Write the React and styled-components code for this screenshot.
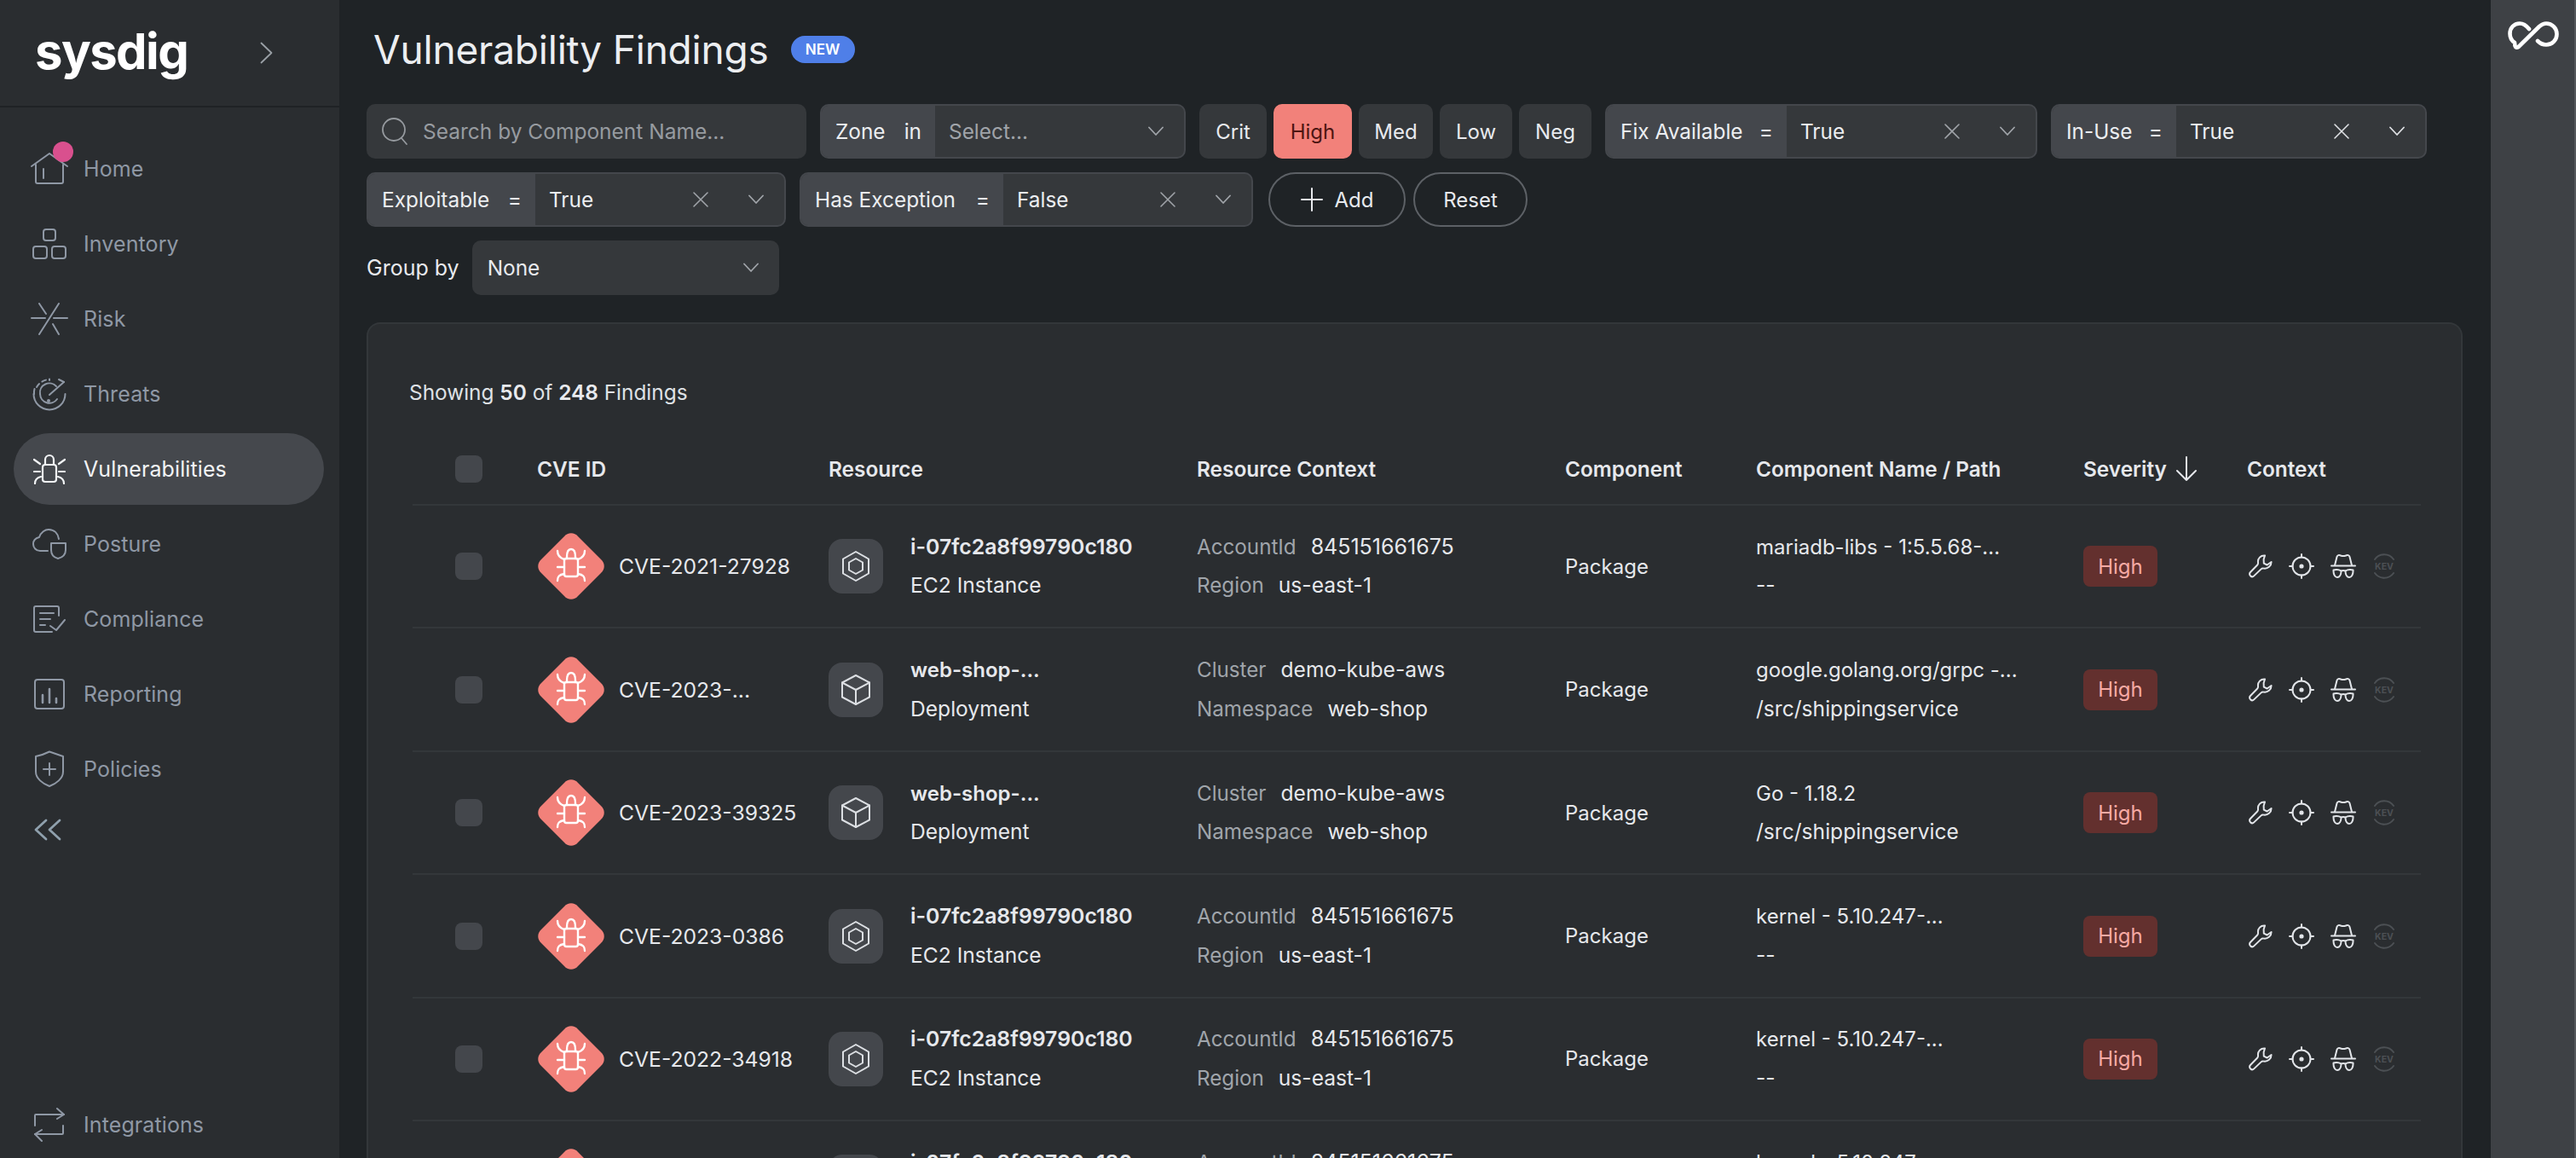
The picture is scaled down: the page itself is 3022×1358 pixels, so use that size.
import React from "react";
import styled, { createGlobalStyle } from "styled-components";

const Global = createGlobalStyle`
  html, body { margin: 0; padding: 0; height: 100%; overflow: hidden; background: #1f2326; }
  body { font-family: Inter, "Noto Sans", sans-serif; }
  #root { height: 100vh; }
  * { box-sizing: border-box; }
`;

const Page = styled.div`
  display: flex;
  width: 100%;
  height: 100vh;
  overflow: hidden;
  background: #1f2326;
`;

const Sidebar = styled.aside`
  flex: 0 0 398px;
  display: flex;
  flex-direction: column;
  background: #2a2d30;
`;
const Brand = styled.div`
  height: 126px;
  flex: none;
  display: flex;
  align-items: center;
  border-bottom: 2px solid #1f2225;
  padding-left: 41px;
`;
const Logo = styled.div`
  width: 264px;
  font-size: 58px;
  font-weight: 700;
  letter-spacing: -1.6px;
  color: #fff;
  line-height: 1;
  margin-top: -4px;
`;
const Nav = styled.nav`
  display: flex;
  flex-direction: column;
  padding: 28px 16px 0;
  flex: 1;
`;
const NavItem = styled.div`
  display: flex;
  align-items: center;
  position: relative;
  padding-left: 20px;
  gap: 18px;
  font-size: 25px;
  font-weight: 400;
  color: ${(p) => (p.$active ? "#f2f4f6" : "#8f98a5")};
  background: ${(p) => (p.$active ? "#45484d" : "transparent")};
  border-radius: 42px;
  margin: 2px 2px 2px 0;
  height: 84px;
  letter-spacing: 0.1px;
`;
const NavIconSlot = styled.span`
  display: flex;
  align-items: center;
  justify-content: center;
  width: 44px;
  height: 44px;
`;
const Dot = styled.span`
  position: absolute;
  left: 46px;
  top: 10px;
  width: 24px;
  height: 24px;
  border-radius: 50%;
  background: #d9508e;
`;
const Collapse = styled.div`
  padding: 0 0 0 24px;
  height: 30px;
  margin-top: 12px;
  color: #8fa0ad;
  display: flex;
  align-items: center;
`;
const NavBottom = styled.div`
  margin-top: auto;
  margin-bottom: -5px;
`;

const Main = styled.main`
  flex: 1;
  min-width: 0;
  padding: 0 33px 0 32px;
  overflow: hidden;
`;
const TitleRow = styled.div`
  height: 116px;
  margin-bottom: 6px;
  display: flex;
  align-items: center;
  padding-left: 8px;
  gap: 26px;
`;
const Title = styled.h1`
  margin: 0;
  font-size: 46px;
  font-weight: 400;
  color: #eceef1;
  letter-spacing: -0.2px;
`;
const NewBadge = styled.span`
  width: 75px;
  height: 32px;
  border-radius: 16px;
  background: #4f7fe8;
  color: #fff;
  font-size: 17px;
  font-weight: 600;
  display: flex;
  align-items: center;
  justify-content: center;
`;
const Filters = styled.div`
  display: flex;
  flex-wrap: wrap;
  gap: 16px 16px;
  align-content: flex-start;
`;
const Search = styled.div`
  width: 516px;
  height: 64px;
  border-radius: 10px;
  background: #35383b;
  display: flex;
  align-items: center;
  padding-left: 17px;
  gap: 17px;
  color: #979ba0;
  font-size: 24.5px;
`;
const FilterGroup = styled.div`
  width: ${(p) => p.$w}px;
  height: 64px;
  display: flex;
  border-radius: 10px;
  border: 2px solid #44474c;
  background: #35383b;
  overflow: hidden;
  font-size: 24.4px;
  color: #eceef1;
`;
const FilterLabel = styled.div`
  width: ${(p) => p.$w}px;
  flex: none;
  background: #44474c;
  display: flex;
  align-items: center;
  justify-content: space-between;
  padding: 0 16px;
`;
const FilterValue = styled.div`
  flex: 1;
  display: flex;
  align-items: center;
  padding: 0 24px 0 16px;
  color: ${(p) => (p.$muted ? "#a0a4a9" : "#eceef1")};
`;
const ValueText = styled.span`
  flex: 1;
`;
const IconBtn = styled.span`
  display: flex;
  align-items: center;
  margin-left: ${(p) => p.$ml || 0}px;
`;
const SevGroup = styled.div`
  display: flex;
  gap: 8px;
`;
const SevBtn = styled.div`
  width: ${(p) => p.$w}px;
  height: 64px;
  border-radius: 10px;
  display: flex;
  align-items: center;
  justify-content: center;
  font-size: 24px;
  background: ${(p) => (p.$on ? "#f2817a" : "#35383b")};
  color: ${(p) => (p.$on ? "#4c1512" : "#e8eaee")};
`;
const PillBtn = styled.div`
  width: ${(p) => p.$w}px;
  height: 64px;
  border-radius: 32px;
  border: 2px solid #5d6166;
  display: flex;
  align-items: center;
  justify-content: center;
  gap: 14px;
  color: #e8eaee;
  font-size: 24px;
`;
const PillGroup = styled.div`
  display: flex;
  gap: 9px;
  margin-left: 2px;
`;
const GroupByRow = styled.div`
  display: flex;
  align-items: center;
  gap: 15px;
  margin-top: 16px;
  color: #e8eaee;
  font-size: 25px;
`;
const GroupSelect = styled.div`
  width: 360px;
  height: 64px;
  border-radius: 10px;
  background: #35383b;
  display: flex;
  align-items: center;
  justify-content: space-between;
  padding: 0 24px 0 18px;
  font-size: 24.4px;
`;

const Card = styled.section`
  margin-top: 32px;
  background: #2a2d30;
  border: 2px solid #33373a;
  border-bottom: none;
  border-radius: 16px 16px 0 0;
  height: 1000px;
`;
const Summary = styled.div`
  padding: 64px 0 32px 48px;
  line-height: 32px;
  font-size: 24.4px;
  color: #dfe2e6;
  b { font-weight: 600; color: #e8eaee; }
`;
const Table = styled.div`
  margin: 0 47px 0 52px;
`;
const cols = "146px 342px 432px 432px 224px 384px 192px 204px";
const HeadRow = styled.div`
  display: grid;
  grid-template-columns: ${cols};
  height: 85px;
  align-items: center;
  border-bottom: 2px solid #33373a;
  font-size: 24.4px;
  font-weight: 600;
  color: #e6e8ec;
  padding-top: 1px;
`;
const Row = styled.div`
  display: grid;
  grid-template-columns: ${cols};
  height: 144.45px;
  align-items: center;
  border-bottom: 2px solid #33373a;
  font-size: 24.6px;
  color: #e6e8ec;
`;
const Check = styled.span`
  display: block;
  width: 32px;
  height: 32px;
  margin-left: 50px;
  border-radius: 8px;
  background: #44474c;
`;
const HeadSort = styled.span`
  display: flex;
  align-items: center;
  gap: 10px;
`;
const CveCell = styled.div`
  display: flex;
  align-items: center;
  gap: 17px;
  padding-left: 1px;
  font-size: 24.7px;
`;
const ResCell = styled.div`
  display: flex;
  align-items: center;
  gap: 32px;
`;
const Tile = styled.span`
  width: 64px;
  height: 64px;
  flex: none;
  border-radius: 16px;
  background: #44474c;
  display: flex;
  align-items: center;
  justify-content: center;
`;
const Lines = styled.div`
  display: flex;
  flex-direction: column;
  line-height: 45.5px;
`;
const Strong = styled.span`
  font-weight: 600;
  font-size: ${(p) => (p.$id ? 24.8 : 24)}px;
`;
const KV = styled.div`
  display: flex;
  gap: 17px;
`;
const Key = styled.span`
  color: #a0a5ab;
  font-size: 24.2px;
`;
const Plain = styled.span`
  font-size: 24px;
`;
const Num = styled.span`
  font-size: ${(p) => (p.$num ? 25 : 24.6)}px;
`;
const SevPill = styled.span`
  width: 87px;
  height: 48px;
  border-radius: 8px;
  background: #63302e;
  color: #f7aaa4;
  display: flex;
  align-items: center;
  justify-content: center;
  font-size: 24px;
`;
const CtxIcons = styled.div`
  display: flex;
  align-items: center;
  gap: 19px;
  padding-left: 2px;
  color: #e2e5e9;
`;
const Rail = styled.aside`
  flex: 0 0 100px;
  background: #3e4145;
  border-right: 2px solid #54575b;
  padding: 25px 0 0 20px;
`;

const Svg = ({ w, h, vb, sw = 2, children, c = "currentColor" }) => (
  <svg width={w} height={h} viewBox={vb || `0 0 ${w} ${h}`} fill="none" stroke={c} strokeWidth={sw} strokeLinecap="round" strokeLinejoin="round">
    {children}
  </svg>
);

const HomeI = () => (
  <Svg w={44} h={40}>
    <path d="M1 17L22 2L43 17" />
    <path d="M6 15V35a2 2 0 0 0 2 2H36a2 2 0 0 0 2-2V15" />
    <path d="M15 20V31" />
  </Svg>
);
const InventoryI = () => (
  <Svg w={40} h={36}>
    <rect x="13" y="1" width="14" height="13" rx="3" />
    <rect x="1" y="21" width="16" height="14" rx="3" />
    <rect x="23" y="21" width="16" height="14" rx="3" />
  </Svg>
);
const RiskI = () => (
  <Svg w={44} h={38}>
    <path d="M1 18H17M27 18H43" />
    <path d="M33 1L10 37" />
    <path d="M10 1L18 13" />
    <path d="M26 25L33 37" />
  </Svg>
);
const ThreatsI = () => (
  <Svg w={40} h={40}>
    <path d="M5 12A18 18 0 0 1 20 3" strokeDasharray="5 4" />
    <path d="M20 2.5V4" />
    <path d="M1.5 20A18.5 18.5 0 0 0 38.5 20" />
    <path d="M2.5 14A18 18 0 0 0 2 20" />
    <path d="M28 11A11 11 0 0 0 9 20A11 11 0 0 0 29 26" />
    <path d="M20 21L37 6" />
    <path d="M31 3L37 6" />
    <circle cx="19" cy="28" r="1" />
  </Svg>
);
const VulnI = () => (
  <Svg w={38} h={36} sw={2.2}>
    <rect x="11" y="13" width="16" height="20" rx="3" />
    <path d="M14 13V7a5 5 0 0 1 10 0V13" />
    <path d="M1 7L8 12M37 7L30 12M1 21H8M37 21H30M2 35C2 30 5 28 9 27M36 35C36 30 33 28 29 27" />
  </Svg>
);
const PostureI = () => (
  <Svg w={40} h={36}>
    <path d="M18 26H9C4 26 1 22 1 18C1 14 4 11 8 10C10 4 15 1 19 1C26 1 30 6 31 12" />
    <path d="M22 17H39V25C39 31 34 34 30 35C26 34 22 31 22 25Z" />
  </Svg>
);
const ComplianceI = () => (
  <Svg w={38} h={34}>
    <path d="M30 13V4a2 2 0 0 0-2-2H3a2 2 0 0 0-2 2V30a2 2 0 0 0 2 2H22" />
    <path d="M8 10H24M8 17H20M8 24H14" />
    <path d="M20 25L27 30L37 18" />
  </Svg>
);
const ReportingI = () => (
  <Svg w={36} h={36}>
    <rect x="1" y="1" width="34" height="34" rx="3" />
    <path d="M10 28V19M18 28V12M26 28V23" strokeWidth="2.6" />
  </Svg>
);
const PoliciesI = () => (
  <Svg w={34} h={44}>
    <path d="M17 1.5L33 7V25C33 33 25 39 17 42C9 39 1 33 1 25V7C6 6 12 4 17 1.5Z" />
    <path d="M17 15V29M10 22H24" />
  </Svg>
);
const IntegrationsI = () => (
  <Svg w={36} h={42}>
    <path d="M1 22V10a1 1 0 0 1 1-1H35" />
    <path d="M27 2L35 9L27 14" />
    <path d="M34 22V31a1 1 0 0 1-1 1H1" />
    <path d="M9 27L1 32L9 40" />
  </Svg>
);
const Chevron = ({ c = "#a0a4a9" }) => (
  <Svg w={18} h={12} sw={1.8} c={c}>
    <path d="M1 1.5L9 10L17 1.5" />
  </Svg>
);
const Cross = ({ c = "#a0a4a9" }) => (
  <Svg w={20} h={20} sw={1.6} c={c}>
    <path d="M2 2L18 18M18 2L2 18" />
  </Svg>
);
const SearchI = () => (
  <Svg w={32} h={34} sw={1.8} c="#969a9f">
    <circle cx="15" cy="15" r="13" />
    <path d="M24 25L30 32" />
  </Svg>
);
const Plus = () => (
  <Svg w={26} h={28} sw={2} c="#e8eaee">
    <path d="M13 1V27M1 14H25" />
  </Svg>
);
const ArrowDown = () => (
  <Svg w={26} h={30} sw={2} c="#e6e8ec">
    <path d="M13 1V28M2 17L13 28L24 17" />
  </Svg>
);
const Diamond = () => (
  <svg width="78" height="78" viewBox="0 0 78 78" fill="none">
    <path d="M31 4C35 -1 43 -1 47 4L74 31C79 35.5 79 42.5 74 47L47 74C43 79 35 79 31 74L4 47C-1 42.5 -1 35.5 4 31Z" fill="#f2817a" />
    <g stroke="#fff" strokeWidth="2.4" strokeLinecap="round" strokeLinejoin="round">
      <rect x="31" y="30" width="16" height="21" rx="2.5" />
      <path d="M34 30V28C34 20 37 19 39 19C41 19 44 20 44 28V30" />
      <path d="M23 21C23 26 25 29 31 31M55 21C55 26 53 29 47 31" />
      <path d="M23 40H31M55 40H47" />
      <path d="M23 56C23 51 25 49 31 48M55 56C55 51 53 49 47 48" />
    </g>
  </svg>
);
const Ec2 = () => (
  <Svg w={32} h={36} sw={2} c="#dcdfe3">
    <path d="M16 1L31 9.5V26.5L16 35L1 26.5V9.5Z" />
    <path d="M16 9L24 13.5V22.5L16 27L8 22.5V13.5Z" />
  </Svg>
);
const Cube = () => (
  <Svg w={34} h={36} sw={2} c="#dcdfe3">
    <path d="M17 1L33 9.5V26.5L17 35L1 26.5V9.5Z" />
    <path d="M1 9.5L17 18L33 9.5M17 18V35" />
  </Svg>
);
const Wrench = () => (
  <Svg w={28} h={28} sw={2}>
    <path d="M19 1.5C14 1 10.5 5 11 9.5C11.2 11 10.8 12 10 12.8L2 21C0.8 22.3 1 24 2 25.2C3.2 26.4 5 26.6 6.2 25.4L14.6 17.4C15.4 16.6 16.4 16.3 17.6 16.6C22.4 17.4 26.6 13.6 26.6 9L21.6 12.5L17.8 10.6L17.6 6Z" />
  </Svg>
);
const Target = () => (
  <Svg w={30} h={30} sw={2}>
    <circle cx="15" cy="15" r="10.5" />
    <path d="M15 1V4.5M15 25.5V29M1 15H4.5M25.5 15H29" />
    <circle cx="15" cy="15" r="1.6" fill="currentColor" />
  </Svg>
);
const Spy = () => (
  <Svg w={30} h={30} sw={2}>
    <path d="M5 14L7.5 4C8 2 10 1.5 12 2.5C14 3.3 16 3.3 18 2.5C20 1.5 22 2 22.5 4L25 14" />
    <path d="M1 14.5H29" />
    <path d="M3.5 19.5C6 19 10 19 12.5 20.5C12.5 25 10.5 28 8 28C5.5 28 3.5 25 3.5 21Z" />
    <path d="M26.5 19.5C24 19 20 19 17.5 20.5C17.5 25 19.5 28 22 28C24.5 28 26.5 25 26.5 21Z" />
    <path d="M12.5 20.5C14 19.8 16 19.8 17.5 20.5" />
  </Svg>
);
const Kev = () => (
  <svg width="28" height="30" viewBox="0 0 28 30" fill="none" stroke="#4c5054" strokeWidth="2" strokeLinecap="round">
    <path d="M3 7A13.5 13.5 0 0 1 25 7" />
    <path d="M3 23A13.5 13.5 0 0 0 25 23" />
    <text x="14" y="19" textAnchor="middle" fontFamily="Inter, sans-serif" fontWeight="700" fontSize="10.5" fill="#4c5054" stroke="none">KEV</text>
  </svg>
);
const Infinity8 = () => (
  <svg width="60" height="33" viewBox="0 0 60 33" fill="none" stroke="#fff" strokeWidth="4.6" strokeLinecap="round" strokeLinejoin="round">
    <path d="M25 9C21 4 17 2.5 14 2.5C7 2.5 2.5 8 2.5 14.5C2.5 19 5 23 8 25L8.5 29C9 31 11 31 12.5 30L37 6C40 3.5 42.5 2.5 45 2.5C52 2.5 57.5 8 57.5 15C57.5 22 52 27.5 45 27.5C41 27.5 38 26 35 23" />
  </svg>
);

const navItems = [
  ["Home", HomeI, true],
  ["Inventory", InventoryI],
  ["Risk", RiskI],
  ["Threats", ThreatsI],
  ["Vulnerabilities", VulnI, false, true],
  ["Posture", PostureI],
  ["Compliance", ComplianceI],
  ["Reporting", ReportingI],
  ["Policies", PoliciesI],
];

const ec2 = (cve, name, path) => ({ cve, res: "i-07fc2a8f99790c180", id: true, kind: "EC2 Instance", icon: Ec2, ctx: [["AccountId", "845151661675", true], ["Region", "us-east-1"]], name, path });
const dep = (cve, name, path) => ({ cve, res: "web-shop-...", kind: "Deployment", icon: Cube, ctx: [["Cluster", "demo-kube-aws"], ["Namespace", "web-shop"]], name, path });
const rows = [
  ec2("CVE-2021-27928", "mariadb-libs - 1:5.5.68-...", "--"),
  dep("CVE-2023-...", "google.golang.org/grpc -...", "/src/shippingservice"),
  dep("CVE-2023-39325", "Go - 1.18.2", "/src/shippingservice"),
  ec2("CVE-2023-0386", "kernel - 5.10.247-...", "--"),
  ec2("CVE-2022-34918", "kernel - 5.10.247-...", "--"),
  ec2("CVE-2022-29581", "kernel - 5.10.247-...", "--"),
];

const Filter = ({ w, lw, label, op, value, muted, clear = true, bright }) => {
  const tone = bright ? "#dfe1e4" : "#a0a4a9";
  return (
    <FilterGroup $w={w}>
      <FilterLabel $w={lw}>
        <span>{label}</span>
        <span>{op}</span>
      </FilterLabel>
      <FilterValue $muted={muted}>
        <ValueText>{value}</ValueText>
        {clear && <IconBtn><Cross c={tone} /></IconBtn>}
        <IconBtn $ml={clear ? 46 : 0}><Chevron c={tone} /></IconBtn>
      </FilterValue>
    </FilterGroup>
  );
};

export default function App() {
  return (
    <Page>
      <Global />
      <Sidebar>
        <Brand>
          <Logo>sysdig</Logo>
          <Svg w={15} h={26} sw={1.8} c="#9aa0a6"><path d="M1.5 1.5L13.5 13L1.5 24.5" /></Svg>
        </Brand>
        <Nav>
          {navItems.map(([label, Icon, dot, active]) => (
            <NavItem key={label} $active={active}>
              <NavIconSlot><Icon /></NavIconSlot>
              <span>{label}</span>
              {dot && <Dot />}
            </NavItem>
          ))}
          <Collapse>
            <Svg w={32} h={26} sw={2.8}>
              <path d="M14 2L2 13L14 24M30 2L18 13L30 24" />
            </Svg>
          </Collapse>
          <NavBottom>
            <NavItem>
              <NavIconSlot><IntegrationsI /></NavIconSlot>
              <span>Integrations</span>
            </NavItem>
          </NavBottom>
        </Nav>
      </Sidebar>

      <Main>
        <TitleRow>
          <Title>Vulnerability Findings</Title>
          <NewBadge>NEW</NewBadge>
        </TitleRow>

        <Filters>
          <Search>
            <SearchI />
            <span>Search by Component Name...</span>
          </Search>
          <Filter w={429} lw={133} label="Zone" op="in" value="Select..." muted clear={false} />
          <SevGroup>
            <SevBtn $w={79}>Crit</SevBtn>
            <SevBtn $w={92} $on>High</SevBtn>
            <SevBtn $w={87}>Med</SevBtn>
            <SevBtn $w={85}>Low</SevBtn>
            <SevBtn $w={85}>Neg</SevBtn>
          </SevGroup>
          <Filter w={507} lw={211} label="Fix Available" op="=" value="True" />
          <Filter w={441} lw={145} label="In-Use" op="=" value="True" bright />
          <Filter w={492} lw={196} label="Exploitable" op="=" value="True" />
          <Filter w={532} lw={237} label="Has Exception" op="=" value="False" />
          <PillGroup>
            <PillBtn $w={161}><Plus />Add</PillBtn>
            <PillBtn $w={134}>Reset</PillBtn>
          </PillGroup>
        </Filters>

        <GroupByRow>
          <span>Group by</span>
          <GroupSelect>
            <span>None</span>
            <Chevron />
          </GroupSelect>
        </GroupByRow>

        <Card>
          <Summary>Showing <b>50</b> of <b>248</b> Findings</Summary>
          <Table>
            <HeadRow>
              <Check />
              <span>CVE ID</span>
              <span>Resource</span>
              <span>Resource Context</span>
              <span>Component</span>
              <span>Component Name / Path</span>
              <HeadSort>Severity <ArrowDown /></HeadSort>
              <span>Context</span>
            </HeadRow>
            {rows.map((r, i) => {
              const Ic = r.icon;
              return (
                <Row key={i}>
                  <Check />
                  <CveCell><Diamond /><span>{r.cve}</span></CveCell>
                  <ResCell>
                    <Tile><Ic /></Tile>
                    <Lines>
                      <Strong $id={r.id}>{r.res}</Strong>
                      <span>{r.kind}</span>
                    </Lines>
                  </ResCell>
                  <Lines>
                    {r.ctx.map(([k, v, num]) => (
                      <KV key={k}><Key>{k}</Key><Num $num={num}>{v}</Num></KV>
                    ))}
                  </Lines>
                  <Plain>Package</Plain>
                  <Lines>
                    <Plain>{r.name}</Plain>
                    <span>{r.path}</span>
                  </Lines>
                  <SevPill>High</SevPill>
                  <CtxIcons>
                    <Wrench />
                    <Target />
                    <Spy />
                    <Kev />
                  </CtxIcons>
                </Row>
              );
            })}
          </Table>
        </Card>
      </Main>

      <Rail>
        <Infinity8 />
      </Rail>
    </Page>
  );
}
